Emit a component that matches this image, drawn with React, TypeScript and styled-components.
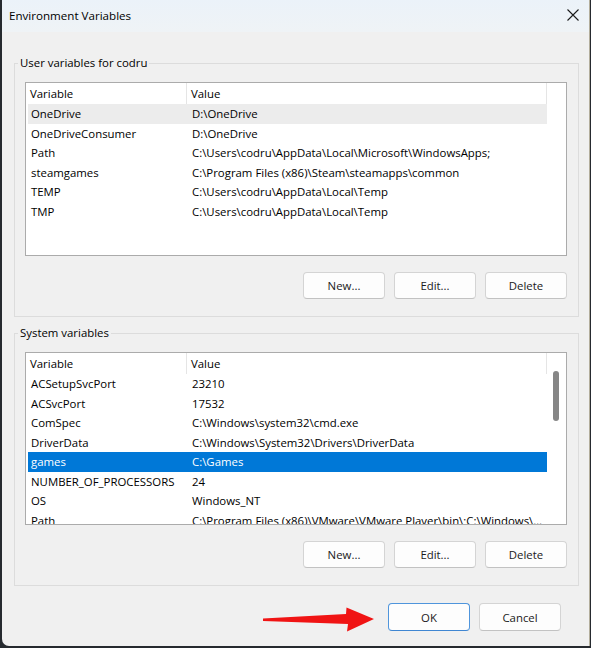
import React from 'react';
import styled, { createGlobalStyle } from 'styled-components';

const GlobalStyle = createGlobalStyle`
  html, body {
    margin: 0;
    padding: 0;
    background: #262a2f;
  }
  * { box-sizing: border-box; }
`;

const FONT = `"Open Sans", "Liberation Sans", sans-serif`;

const Page = styled.div`
  width: 591px;
  height: 648px;
  display: flex;
  align-items: flex-start;
  font-family: ${FONT};
  font-size: 11.4px;
  color: #000;
`;

const Window = styled.div`
  position: relative;
  margin-left: 2px;
  width: 588px;
  height: 646px;
  background: #f0f0f0;
  border-right: 1px solid #b3ae9c;
  border-bottom-left-radius: 7px;
  display: flex;
  flex-direction: column;
  overflow: hidden;
`;

const TitleBar = styled.div`
  height: 32px;
  flex: none;
  display: flex;
  align-items: center;
  justify-content: space-between;
  padding-left: 7px;
  background: linear-gradient(180deg, #ebf2f9 0%, #eff3f6 100%);
`;

const Title = styled.span`
  font-size: 11.6px;
  color: #000;
  padding-bottom: 1px;
`;

const CloseIcon = styled.svg`
  width: 12px;
  height: 12px;
  margin-right: 10px;
  margin-bottom: 2px;
`;

const Body = styled.div`
  flex: 1;
  display: flex;
  flex-direction: column;
  gap: 16px;
  padding: 31px 10px 0 12px;
`;

const Group = styled.div`
  position: relative;
  border: 1px solid #dcdcdc;
  padding: 18px 11px 17px 10px;
  display: flex;
  flex-direction: column;
  gap: 16px;
`;

const Legend = styled.span`
  position: absolute;
  top: -10px;
  left: 3px;
  padding: 0 2px;
  background: #f0f0f0;
  line-height: 18px;
`;

const List = styled.div<{ $h: number }>`
  height: ${p => p.$h}px;
  border: 1px solid #ababab;
  background: #fff;
  display: flex;
  padding-left: 2px;
  overflow: hidden;
`;

const ListContent = styled.div`
  flex: 1;
  min-width: 0;
  display: flex;
  flex-direction: column;
`;

const Header = styled.div`
  height: 21px;
  flex: none;
  display: grid;
  grid-template-columns: 159px 1fr;
`;

const HeaderCell = styled.div`
  display: flex;
  align-items: center;
  padding-left: 2px;
  border-right: 1px solid #e5e5e5;
  &:nth-child(2) { padding-left: 4px; }
`;

const Row = styled.div<{ $state?: 'hover' | 'selected' }>`
  height: 19.5px;
  flex: none;
  display: grid;
  grid-template-columns: 160px 1fr;
  align-items: center;
  background: ${p => (p.$state === 'selected' ? '#0078d7' : p.$state === 'hover' ? '#ececec' : 'transparent')};
  color: ${p => (p.$state === 'selected' ? '#fff' : '#000')};
`;

const Cell = styled.div`
  padding-left: 3px;
  white-space: nowrap;
  overflow: hidden;
  text-overflow: ellipsis;
  &:nth-child(2) { padding-left: 4px; padding-right: 2px; }
`;

const ScrollColumn = styled.div`
  width: 19px;
  flex: none;
  display: flex;
  flex-direction: column;
  align-items: flex-start;
`;

const ScrollThumb = styled.div`
  margin-top: 18px;
  margin-left: 6px;
  width: 6px;
  height: 50px;
  border-radius: 3px;
  background: #868686;
`;

const ButtonRow = styled.div`
  display: flex;
  justify-content: flex-end;
  gap: 9px;
`;

const Button = styled.div<{ $primary?: boolean; $h?: number }>`
  width: 82px;
  height: ${p => p.$h ?? 27}px;
  display: flex;
  align-items: center;
  justify-content: center;
  background: #fdfdfd;
  border: 1px solid ${p => (p.$primary ? '#4f95dc' : '#d4d4d4')};
  border-bottom-color: ${p => (p.$primary ? '#3f86d2' : '#c2c2c2')};
  border-radius: 4px;
  color: #1a1a1a;
`;

const Footer = styled.div`
  display: flex;
  justify-content: flex-end;
  gap: 9px;
  padding-top: 1px;
  padding-right: 18px;
`;

const Arrow = styled.svg`
  position: absolute;
  left: 258px;
  top: 604px;
  width: 120px;
  height: 30px;
`;

type Variable = { name: string; value: string; state?: 'hover' | 'selected' };

const userVars: Variable[] = [
  { name: 'OneDrive', value: 'D:\\OneDrive', state: 'hover' },
  { name: 'OneDriveConsumer', value: 'D:\\OneDrive' },
  { name: 'Path', value: 'C:\\Users\\codru\\AppData\\Local\\Microsoft\\WindowsApps;' },
  { name: 'steamgames', value: 'C:\\Program Files (x86)\\Steam\\steamapps\\common' },
  { name: 'TEMP', value: 'C:\\Users\\codru\\AppData\\Local\\Temp' },
  { name: 'TMP', value: 'C:\\Users\\codru\\AppData\\Local\\Temp' },
];

const systemVars: Variable[] = [
  { name: 'ACSetupSvcPort', value: '23210' },
  { name: 'ACSvcPort', value: '17532' },
  { name: 'ComSpec', value: 'C:\\Windows\\system32\\cmd.exe' },
  { name: 'DriverData', value: 'C:\\Windows\\System32\\Drivers\\DriverData' },
  { name: 'games', value: 'C:\\Games', state: 'selected' },
  { name: 'NUMBER_OF_PROCESSORS', value: '24' },
  { name: 'OS', value: 'Windows_NT' },
  { name: 'Path', value: 'C:\\Program Files (x86)\\VMware\\VMware Player\\bin\\;C:\\Windows\\system32;C:\\Windows' },
];

const VarList = ({ vars, height, scroll }: { vars: Variable[]; height: number; scroll?: boolean }) => (
  <List $h={height}>
    <ListContent>
      <Header>
        <HeaderCell>Variable</HeaderCell>
        <HeaderCell>Value</HeaderCell>
      </Header>
      {vars.map(v => (
        <Row key={v.name + v.value} $state={v.state}>
          <Cell>{v.name}</Cell>
          <Cell>{v.value}</Cell>
        </Row>
      ))}
    </ListContent>
    <ScrollColumn>{scroll && <ScrollThumb />}</ScrollColumn>
  </List>
);

const ActionButtons = () => (
  <ButtonRow>
    <Button>New...</Button>
    <Button>Edit...</Button>
    <Button>Delete</Button>
  </ButtonRow>
);

export default function App() {
  return (
    <Page>
      <GlobalStyle />
      <Window>
        <TitleBar>
          <Title>Environment Variables</Title>
          <CloseIcon viewBox="0 0 12 12">
            <path d="M0.5 0.5 L11.5 11.5 M11.5 0.5 L0.5 11.5" stroke="#1a1a1a" strokeWidth="1.1" fill="none" />
          </CloseIcon>
        </TitleBar>
        <Body>
          <Group>
            <Legend>User variables for codru</Legend>
            <VarList vars={userVars} height={174} />
            <ActionButtons />
          </Group>
          <Group>
            <Legend>System variables</Legend>
            <VarList vars={systemVars} height={173} scroll />
            <ActionButtons />
          </Group>
          <Footer>
            <Button $primary $h={28}>OK</Button>
            <Button $h={28}>Cancel</Button>
          </Footer>
        </Body>
        <Arrow viewBox="0 0 120 30">
          <polygon points="3,14.5 86,10 86.5,3.5 114,15 87,27.5 88,20 3,17" fill="#f01414" />
        </Arrow>
      </Window>
    </Page>
  );
}
